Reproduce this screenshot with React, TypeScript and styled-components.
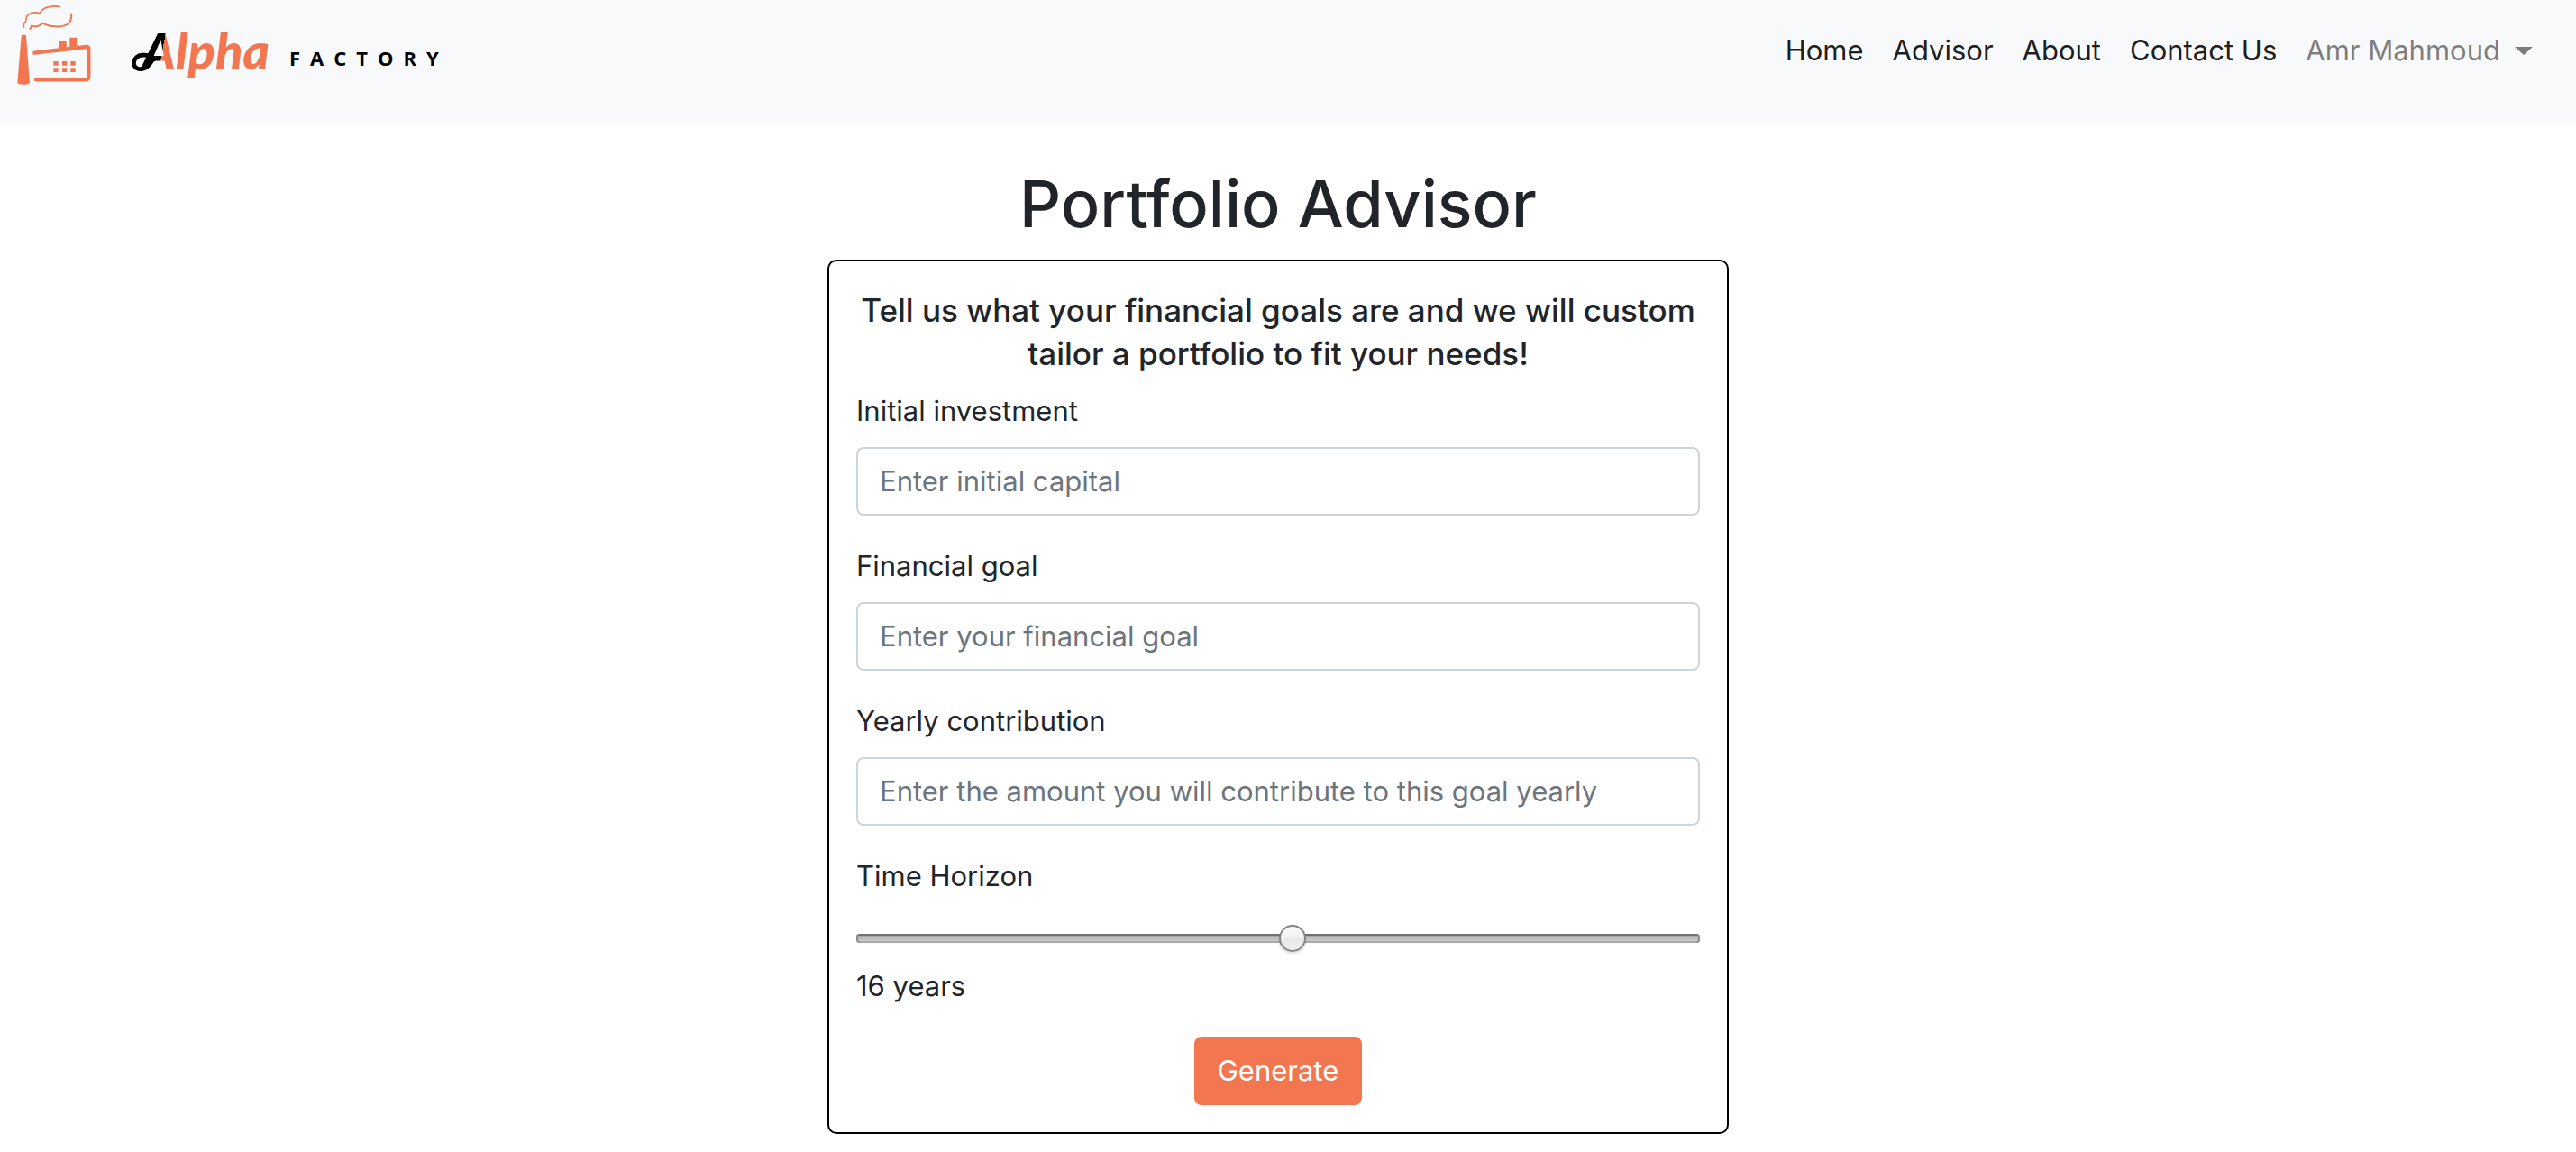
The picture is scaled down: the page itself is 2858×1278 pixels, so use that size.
import React, { useState } from "react";
import styled, { createGlobalStyle } from "styled-components";

const accent = "#f2764f";

const GlobalStyle = createGlobalStyle`
  *, *::before, *::after { box-sizing: border-box; }
  body {
    margin: 0;
    background: #fff;
    color: #212529;
    font-family: Inter, "Liberation Sans", sans-serif;
    font-size: 31px;
    line-height: 48px;
  }
`;

const Header = styled.header`
  display: flex;
  justify-content: space-between;
  align-items: flex-start;
  padding: 4px 32px 40px 18px;
  background: #f8f9fb;
`;

const Brand = styled.a`
  display: flex;
  align-items: center;
  color: #000;
  text-decoration: none;
`;

const FactoryIcon = styled.svg`
  display: block;
  width: 84px;
  height: 92px;
`;

const Wordmark = styled.span`
  display: flex;
  align-items: flex-end;
  gap: 22px;
  padding: 12px 0 0 44px;
`;

const Script = styled.span`
  position: relative;
  padding-left: 12px;
  color: ${accent};
  font-family: Lato, "Liberation Sans", sans-serif;
  font-size: 56px;
  font-style: italic;
  font-weight: 900;
  line-height: 64px;
`;

const Initial = styled.span`
  background: linear-gradient(100deg, #000 58%, ${accent} 58%);
  background-clip: text;
  color: transparent;
`;

const Swash = styled.svg`
  position: absolute;
  left: 0;
  bottom: 8px;
  width: 30px;
  height: 24px;
`;

const Tracked = styled.span`
  font-family: "Open Sans", "Noto Sans", sans-serif;
  font-size: 22px;
  font-weight: 700;
  letter-spacing: 11px;
  line-height: 48px;
`;

const Nav = styled.nav`
  display: flex;
  gap: 32px;
  padding: 28px 16px 0 0;
`;

const NavLink = styled.a`
  color: rgba(0, 0, 0, 0.9);
  text-decoration: none;
`;

const UserMenu = styled.button`
  display: flex;
  align-items: center;
  gap: 16px;
  padding: 0;
  border: 0;
  background: none;
  color: rgba(0, 0, 0, 0.5);
  font: inherit;
  cursor: pointer;

  &::after {
    content: "";
    border: 10px solid transparent;
    border-top: 9px solid currentColor;
    border-bottom: 0;
  }
`;

const Main = styled.main`
  display: flex;
  flex-direction: column;
  align-items: center;
  gap: 14px;
  padding: 42px 22px 20px 0;
`;

const Title = styled.h1`
  margin: 0;
  font-size: 72px;
  font-weight: 500;
  line-height: 96px;
`;

const Card = styled.form`
  display: flex;
  flex-direction: column;
  width: 100%;
  max-width: 1000px;
  padding: 30px;
  border: 2px solid #000;
  border-radius: 10px;
`;

const Intro = styled.h2`
  margin: 0 0 16px;
  font-size: 35px;
  font-weight: 500;
  line-height: 48px;
  text-align: center;
`;

const Field = styled.div`
  display: flex;
  flex-direction: column;
  gap: 16px;
  margin-bottom: 32px;
`;

const TextInput = styled.input`
  width: 100%;
  padding: 12px 24px;
  border: 2px solid #ced4da;
  border-radius: 8px;
  background: #fff;
  color: #495057;
  font: inherit;

  &::placeholder {
    color: #6c757d;
    opacity: 1;
  }
`;

const SliderField = styled.div`
  display: flex;
  flex-direction: column;
  margin-bottom: 32px;
`;

const Slider = styled.input`
  appearance: none;
  width: 100%;
  height: 58px;
  margin: 16px 0 0;
  background: none;

  &::-webkit-slider-runnable-track {
    height: 10px;
    border-radius: 4px;
    background: linear-gradient(#6f6f6f 0 2px, #a8a8a8 2px, #c6c6c6 6px 8px, #adadad 8px);
    box-shadow: inset 2px 0 1px #8a8a8a, inset -2px 0 1px #8a8a8a;
  }

  &::-webkit-slider-thumb {
    appearance: none;
    width: 30px;
    height: 30px;
    margin-top: -10px;
    border: 2px solid #858585;
    border-radius: 50%;
    background: linear-gradient(#fafafa, #f0f0f0 50%, #e8e8e8 50%, #eee);
    box-shadow: 0 2px 3px rgba(0, 0, 0, 0.15);
  }
`;

const Submit = styled.button`
  align-self: center;
  padding: 12px 24px;
  border: 2px solid ${accent};
  border-radius: 8px;
  background: ${accent};
  color: #fff;
  font: inherit;
  cursor: pointer;
`;

const links = ["Home", "Advisor", "About", "Contact Us"];

const fields = [
  { id: "initial", label: "Initial investment", placeholder: "Enter initial capital" },
  { id: "goal", label: "Financial goal", placeholder: "Enter your financial goal" },
  {
    id: "yearly",
    label: "Yearly contribution",
    placeholder: "Enter the amount you will contribute to this goal yearly",
  },
];

function Factory() {
  return (
    <FactoryIcon viewBox="54 12 252 276" fill="none" stroke={accent} aria-hidden="true">
      <path
        d="M71 120Q71 116 75 116H83Q87 116 87 120L99 277Q79 286 58 277Z"
        fill={accent}
        stroke="none"
      />
      <path
        d="M115 176L287 156Q295 155 295 163V254Q295 265 284 265H120"
        strokeWidth="13"
        strokeLinecap="round"
      />
      <path
        d="M196 136H221V158L232 157V125H256V160L196 168Z"
        fill={accent}
        stroke="none"
      />
      <path
        d="M178 204H194V218H178ZM207 204H223V218H207ZM235 204H251V218H235ZM178 226H194V240H178ZM207 226H223V240H207ZM235 226H251V240H235Z"
        fill={accent}
        stroke="none"
      />
      <path
        d="M80 92Q76 78 86 71Q86 50 102 44Q118 39 132 44Q144 24 168 22Q184 19 201 23"
        strokeWidth="5"
      />
      <path
        d="M98 97Q103 94 105 86Q126 93 142 77Q160 87 184 88Q216 90 230 76Q240 65 237 44"
        strokeWidth="6"
      />
    </FactoryIcon>
  );
}

export default function App() {
  const [years, setYears] = useState(16);

  return (
    <>
      <GlobalStyle />
      <Header>
        <Brand href="#">
          <Factory />
          <Wordmark>
            <Script>
              <Swash viewBox="0 0 90 72" fill="none" stroke="#000" strokeWidth="14" aria-hidden="true">
                <path d="M76 20C62 48 48 62 30 62C12 62 4 48 9 34C16 14 46 6 82 30" />
              </Swash>
              <Initial>A</Initial>lpha
            </Script>
            <Tracked>FACTORY</Tracked>
          </Wordmark>
        </Brand>
        <Nav>
          {links.map((link) => (
            <NavLink key={link} href="#">
              {link}
            </NavLink>
          ))}
          <UserMenu type="button">Amr Mahmoud</UserMenu>
        </Nav>
      </Header>
      <Main>
        <Title>Portfolio Advisor</Title>
        <Card onSubmit={(event) => event.preventDefault()}>
          <Intro>
            Tell us what your financial goals are and we will custom tailor a portfolio to fit your
            needs!
          </Intro>
          {fields.map((field) => (
            <Field key={field.id}>
              <label htmlFor={field.id}>{field.label}</label>
              <TextInput id={field.id} type="text" placeholder={field.placeholder} />
            </Field>
          ))}
          <SliderField>
            <label htmlFor="horizon">Time Horizon</label>
            <Slider
              id="horizon"
              type="range"
              min={1}
              max={30}
              value={years}
              onChange={(event) => setYears(Number(event.target.value))}
            />
            <output htmlFor="horizon">{years} years</output>
          </SliderField>
          <Submit type="submit">Generate</Submit>
        </Card>
      </Main>
    </>
  );
}
